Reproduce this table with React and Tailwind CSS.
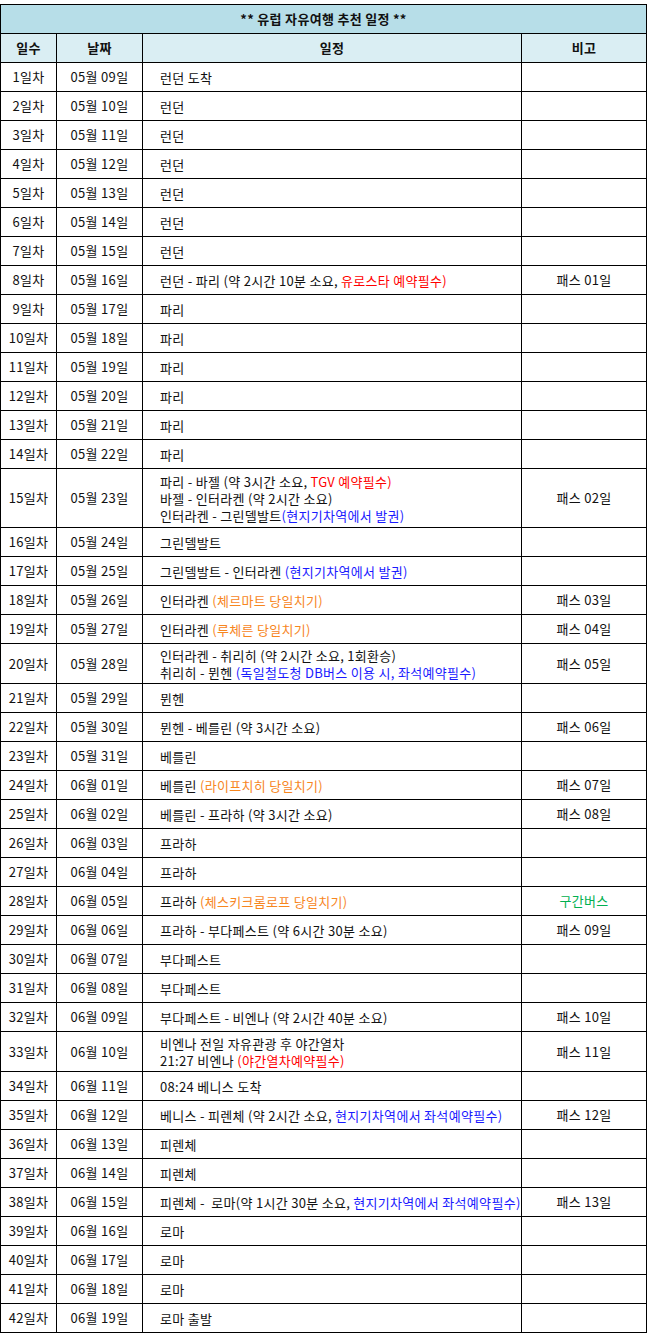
const RED = "text-[#ff0000]";
const BLUE = "text-[#1a1aff]";
const ORANGE = "text-[#f7861e]";
const GREEN = "text-[#00b050]";

const red = (t) => <span className={RED}>{t}</span>;
const blue = (t) => <span className={BLUE}>{t}</span>;
const orange = (t) => <span className={ORANGE}>{t}</span>;

// [일수, 날짜, 일정 줄들, 비고]
const rows = [
  ["1일차", "05월 09일", ["런던 도착"]],
  ["2일차", "05월 10일", ["런던"]],
  ["3일차", "05월 11일", ["런던"]],
  ["4일차", "05월 12일", ["런던"]],
  ["5일차", "05월 13일", ["런던"]],
  ["6일차", "05월 14일", ["런던"]],
  ["7일차", "05월 15일", ["런던"]],
  ["8일차", "05월 16일", [<>런던 - 파리 (약 2시간 10분 소요, {red("유로스타 예약필수)")}</>], "패스 01일"],
  ["9일차", "05월 17일", ["파리"]],
  ["10일차", "05월 18일", ["파리"]],
  ["11일차", "05월 19일", ["파리"]],
  ["12일차", "05월 20일", ["파리"]],
  ["13일차", "05월 21일", ["파리"]],
  ["14일차", "05월 22일", ["파리"]],
  [
    "15일차",
    "05월 23일",
    [
      <>파리 - 바젤 (약 3시간 소요, {red("TGV 예약필수)")}</>,
      "바젤 - 인터라켄 (약 2시간 소요)",
      <>인터라켄 - 그린델발트{blue("(현지기차역에서 발권)")}</>,
    ],
    "패스 02일",
  ],
  ["16일차", "05월 24일", ["그린델발트"]],
  ["17일차", "05월 25일", [<>그린델발트 - 인터라켄 {blue("(현지기차역에서 발권)")}</>]],
  ["18일차", "05월 26일", [<>인터라켄 {orange("(체르마트 당일치기)")}</>], "패스 03일"],
  ["19일차", "05월 27일", [<>인터라켄 {orange("(루체른 당일치기)")}</>], "패스 04일"],
  [
    "20일차",
    "05월 28일",
    [
      "인터라켄 - 취리히 (약 2시간 소요, 1회환승)",
      <>취리히 - 뮌헨 {blue("(독일철도청 DB버스 이용 시, 좌석예약필수)")}</>,
    ],
    "패스 05일",
  ],
  ["21일차", "05월 29일", ["뮌헨"]],
  ["22일차", "05월 30일", ["뮌헨 - 베를린 (약 3시간 소요)"], "패스 06일"],
  ["23일차", "05월 31일", ["베를린"]],
  ["24일차", "06월 01일", [<>베를린 {orange("(라이프치히 당일치기)")}</>], "패스 07일"],
  ["25일차", "06월 02일", ["베를린 - 프라하 (약 3시간 소요)"], "패스 08일"],
  ["26일차", "06월 03일", ["프라하"]],
  ["27일차", "06월 04일", ["프라하"]],
  ["28일차", "06월 05일", [<>프라하 {orange("(체스키크롬로프 당일치기)")}</>], <span className={GREEN}>구간버스</span>],
  ["29일차", "06월 06일", ["프라하 - 부다페스트 (약 6시간 30분 소요)"], "패스 09일"],
  ["30일차", "06월 07일", ["부다페스트"]],
  ["31일차", "06월 08일", ["부다페스트"]],
  ["32일차", "06월 09일", ["부다페스트 - 비엔나 (약 2시간 40분 소요)"], "패스 10일"],
  [
    "33일차",
    "06월 10일",
    ["비엔나 전일 자유관광 후 야간열차", <>21:27 비엔나 {red("(야간열차예약필수)")}</>],
    "패스 11일",
  ],
  ["34일차", "06월 11일", ["08:24 베니스 도착"]],
  ["35일차", "06월 12일", [<>베니스 - 피렌체 (약 2시간 소요, {blue("현지기차역에서 좌석예약필수)")}</>], "패스 12일"],
  ["36일차", "06월 13일", ["피렌체"]],
  ["37일차", "06월 14일", ["피렌체"]],
  ["38일차", "06월 15일", [<>피렌체 -&nbsp; 로마(약 1시간 30분 소요, {blue("현지기차역에서 좌석예약필수)")}</>], "패스 13일"],
  ["39일차", "06월 16일", ["로마"]],
  ["40일차", "06월 17일", ["로마"]],
  ["41일차", "06월 18일", ["로마"]],
  ["42일차", "06월 19일", ["로마 출발"]],
];

const rowHeight = (lines) => {
  if (lines === 3) return "h-[59px]";
  if (lines === 2) return "h-[40px]";
  return "h-[29px]";
};

export default function App() {
  return (
    <div
      className="bg-white pt-1 text-[13px] tracking-[0.3px] text-[#111]"
      style={{ fontFamily: '"Noto Sans CJK KR", "Noto Sans", sans-serif' }}
    >
      <table className="w-[646px] table-fixed border-collapse">
        <colgroup>
          <col className="w-[56px]" />
          <col className="w-[86px]" />
          <col className="w-[379px]" />
          <col className="w-[125px]" />
        </colgroup>
        <thead>
          <tr className="h-[29px]">
            <th colSpan={4} className="border border-black bg-[#b7dee8] p-0 text-center font-bold">
              ** 유럽 자유여행 추천 일정 **
            </th>
          </tr>
          <tr className="h-[29px] bg-[#daeef3]">
            <th className="border border-black p-0 text-center font-bold">일수</th>
            <th className="border border-black p-0 text-center font-bold">날짜</th>
            <th className="border border-black p-0 text-center font-bold">일정</th>
            <th className="border border-black p-0 text-center font-bold">비고</th>
          </tr>
        </thead>
        <tbody>
          {rows.map(([day, date, lines, note]) => (
            <tr key={day} className={rowHeight(lines.length)}>
              <td className="border border-black p-0 text-center">{day}</td>
              <td className="border border-black p-0 text-center">{date}</td>
              <td className="overflow-hidden border border-black py-0 pl-[17px] pr-0 leading-[17px] whitespace-nowrap">
                {lines.map((line, i) => (
                  <div key={i}>{line}</div>
                ))}
              </td>
              <td className="border border-black p-0 text-center">{note}</td>
            </tr>
          ))}
        </tbody>
      </table>
    </div>
  );
}
